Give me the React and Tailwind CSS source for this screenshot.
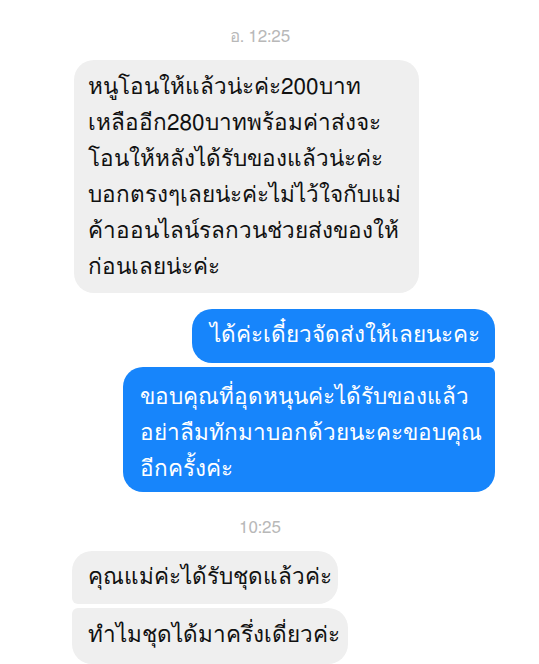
import React from "react";

function Lines({ lines }) {
  return lines.map((l, i) => (
    <div key={i} className="whitespace-nowrap">
      {l}
    </div>
  ));
}

function Stamp({ children, className }) {
  return (
    <div className={`flex justify-center pr-[19px] text-[17px] leading-[20px] text-[#b8b8b8] ${className}`}>
      {children}
    </div>
  );
}

export default function App() {
  return (
    <div className="w-[539px] h-[664px] overflow-hidden bg-white text-[22.5px] leading-[36px] font-['FreeSans','Liberation_Sans',sans-serif]">
      <Stamp className="pt-[27px]">อ. 12:25</Stamp>

      <div className="pl-[74px] pt-[13px]">
        {/* incoming long message */}
        <div className="w-[345px] rounded-[20px] bg-[#efefef] pl-[14px] pt-[10px] pb-[7px] text-[#111]">
          <Lines
            lines={[
              "หนูโอนให้แล้วน่ะค่ะ200บาท",
              "เหลืออีก280บาทพร้อมค่าส่งจะ",
              "โอนให้หลังได้รับของแล้วน่ะค่ะ",
              "บอกตรงๆเลยน่ะค่ะไม่ไว้ใจกับแม่",
              "ค้าออนไลน์รลกวนช่วยส่งของให้",
              "ก่อนเลยน่ะค่ะ",
            ]}
          />
        </div>
      </div>

      <div className="flex flex-col items-end gap-[4px] pr-[44px] pt-[16px] text-white">
        <div className="w-[303px] h-[54px] rounded-[20px] rounded-br-[6px] bg-[#1785fb] pl-[18px] pt-[9px] whitespace-nowrap">
          ได้ค่ะเดี๋ยวจัดส่งให้เลยนะคะ
        </div>
        <div className="w-[372px] h-[125px] rounded-[20px] rounded-tr-[6px] bg-[#1785fb] pl-[17px] pt-[13px]">
          <Lines
            lines={[
              "ขอบคุณที่อุดหนุนค่ะได้รับของแล้ว",
              "อย่าลืมทักมาบอกด้วยนะคะขอบคุณ",
              "อีกครั้งค่ะ",
            ]}
          />
        </div>
      </div>

      <Stamp className="pt-[26px]">10:25</Stamp>

      <div className="flex flex-col items-start gap-[4px] pl-[72px] pt-[13px] text-[#111]">
        <div className="w-[266px] h-[53px] rounded-[20px] rounded-bl-[6px] bg-[#efefef] pl-[16px] pt-[9px] whitespace-nowrap">
          คุณแม่ค่ะได้รับชุดแล้วค่ะ
        </div>
        <div className="w-[276px] h-[56px] rounded-[20px] rounded-tl-[6px] bg-[#efefef] pl-[16px] pt-[10px] whitespace-nowrap">
          ทำไมชุดได้มาครึ่งเดี่ยวค่ะ
        </div>
      </div>
    </div>
  );
}
